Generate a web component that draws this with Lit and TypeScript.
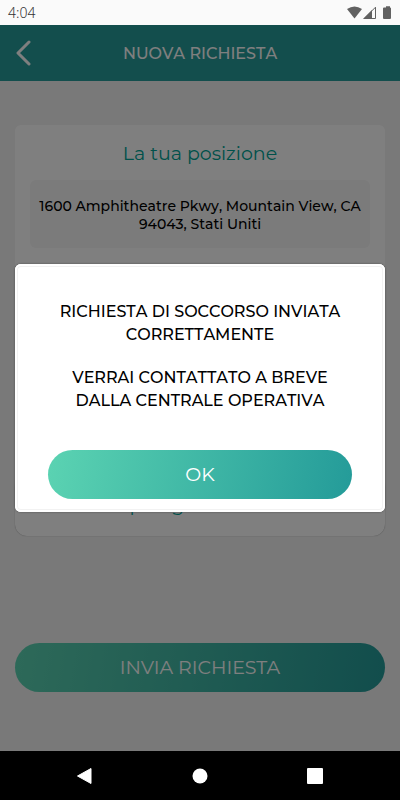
import { LitElement, html, css } from "lit";
import { customElement } from "lit/decorators.js";

@customElement("app-root")
export class AppRoot extends LitElement {
  static styles = css`
    :host {
      display: block;
      font-family: Montserrat, "Inter", "Liberation Sans", sans-serif;
      font-weight: 500;
      font-kerning: none;
      color: #000;
    }
    * { box-sizing: border-box; }
    h1, h2, p { margin: 0; font-weight: 500; }
    button { font: inherit; border: 0; padding: 0; cursor: pointer; }
    svg { display: block; }
    .screen {
      min-height: 100vh;
      display: flex;
      flex-direction: column;
      background: #000;
    }
    .status {
      height: 25px;
      flex: none;
      display: flex;
      align-items: center;
      justify-content: space-between;
      padding: 0 8px;
      background: #fafafa;
      color: #333;
      font: 300 14px/20px "Noto Sans", sans-serif;
    }
    .app {
      flex: 1;
      position: relative;
      display: flex;
      flex-direction: column;
      background: #f2f2f2;
    }
    .bar {
      height: 56px;
      flex: none;
      display: grid;
      grid-template-columns: 48px 1fr 48px;
      align-items: center;
      background: #269c9a;
      color: #fff;
      text-align: center;
    }
    .bar h1 { padding-top: 2px; font-size: 16px; line-height: 24px; }
    .back {
      height: 48px;
      display: grid;
      place-items: center;
      background: none;
      color: inherit;
    }
    .content {
      flex: 1;
      display: flex;
      flex-direction: column;
      padding: 44px 15px 59px;
    }
    .cards { flex: 1; }
    .card {
      padding: 17px 15px 16px;
      min-height: 180px;
      border-radius: 6px;
      background: #fff;
      text-align: center;
    }
    .lower {
      min-height: 60px;
      margin-top: 171px;
      border-radius: 12px;
      box-shadow: 0 0 1px #888;
    }
    .card h2 { font-size: 19px; font-weight: 400; line-height: 24px; color: #00a396; }
    .address {
      min-height: 68px;
      margin-top: 14px;
      padding: 17px 4px 15px;
      border-radius: 6px;
      background: #f7f7f7;
      font-size: 14px;
      line-height: 18px;
    }
    .pill {
      width: 100%;
      height: 49px;
      flex: none;
      border-radius: 25px;
      background: linear-gradient(100deg, #5bd3b2, #249b99);
      color: #fff;
      font-size: 19px;
      font-weight: 400;
      font-kerning: normal;
      line-height: 24px;
    }
    .overlay {
      position: absolute;
      inset: 0;
      display: flex;
      align-items: center;
      justify-content: center;
      padding: 0 15px;
      background: rgba(0, 0, 0, 0.5);
    }
    .dialog {
      width: 100%;
      padding: 36px 33px 13px;
      border-radius: 6px;
      background: #fff;
      box-shadow: inset 0 0 0 2px #fff, inset 0 0 0 3px #f2f2f2, 0 0 2px #444;
      text-align: center;
      font-size: 16px;
      line-height: 23px;
    }
    .dialog p + p { margin-top: 20px; }
    .dialog .pill { margin-top: 38px; }
    .nav {
      height: 49px;
      flex: none;
      display: flex;
      align-items: center;
      justify-content: center;
      gap: 67px;
    }
    .nav button { width: 48px; height: 48px; display: grid; place-items: center; background: none; }
  `;

  render() {
    return html`
      <div class="screen">
        <div class="status">
          <span>4:04</span>
          <svg width="45" height="14" viewBox="0 0 45 14" fill="#616161" aria-hidden="true">
            <path d="M0 3Q7.500-2 15 3L7.500 12.500Z" />
            <path d="M28.500 1.200V12.500H17.200Z" fill="none" stroke="#616161" />
            <path d="M25 4V13H16Z" />
            <path d="M37 1.500h2V.3h4v1.200q1 0 1 1v9.500q0 1-1 1h-6q-1 0-1-1V2.500q0-1 1-1z" />
          </svg>
        </div>
        <main class="app">
          <header class="bar">
            <button class="back" aria-label="Indietro">
              <svg width="18" height="26" viewBox="0 0 18 26" fill="none" stroke="#fff" stroke-width="3">
                <path d="M14 2L3 13L14 24" stroke-linecap="round" stroke-linejoin="round" />
              </svg>
            </button>
            <h1>NUOVA RICHIESTA</h1>
          </header>
          <div class="content">
            <div class="cards">
              <section class="card">
                <h2>La tua posizione</h2>
                <p class="address">1600 Amphitheatre Pkwy, Mountain View, CA 94043, Stati Uniti</p>
              </section>
              <section class="card lower">
                <h2>Tipologia richiesta</h2>
              </section>
            </div>
            <button class="pill">INVIA RICHIESTA</button>
          </div>
          <div class="overlay">
            <div class="dialog" role="dialog" aria-modal="true">
              <p>RICHIESTA DI SOCCORSO INVIATA CORRETTAMENTE</p>
              <p>VERRAI CONTATTATO A BREVE DALLA CENTRALE OPERATIVA</p>
              <button class="pill">OK</button>
            </div>
          </div>
        </main>
        <nav class="nav">
          <button aria-label="Indietro">
            <svg width="18" height="18" viewBox="0 0 18 18"><path d="M15 1.500V16.500L1.500 9Z" fill="#fff" stroke="#fff" stroke-linejoin="round" /></svg>
          </button>
          <button aria-label="Home">
            <svg width="16" height="16" viewBox="0 0 16 16"><circle cx="8" cy="8" r="7.500" fill="#fff" /></svg>
          </button>
          <button aria-label="Recenti">
            <svg width="16" height="16" viewBox="0 0 16 16"><rect width="16" height="16" rx="1" fill="#fff" /></svg>
          </button>
        </nav>
      </div>
    `;
  }
}
